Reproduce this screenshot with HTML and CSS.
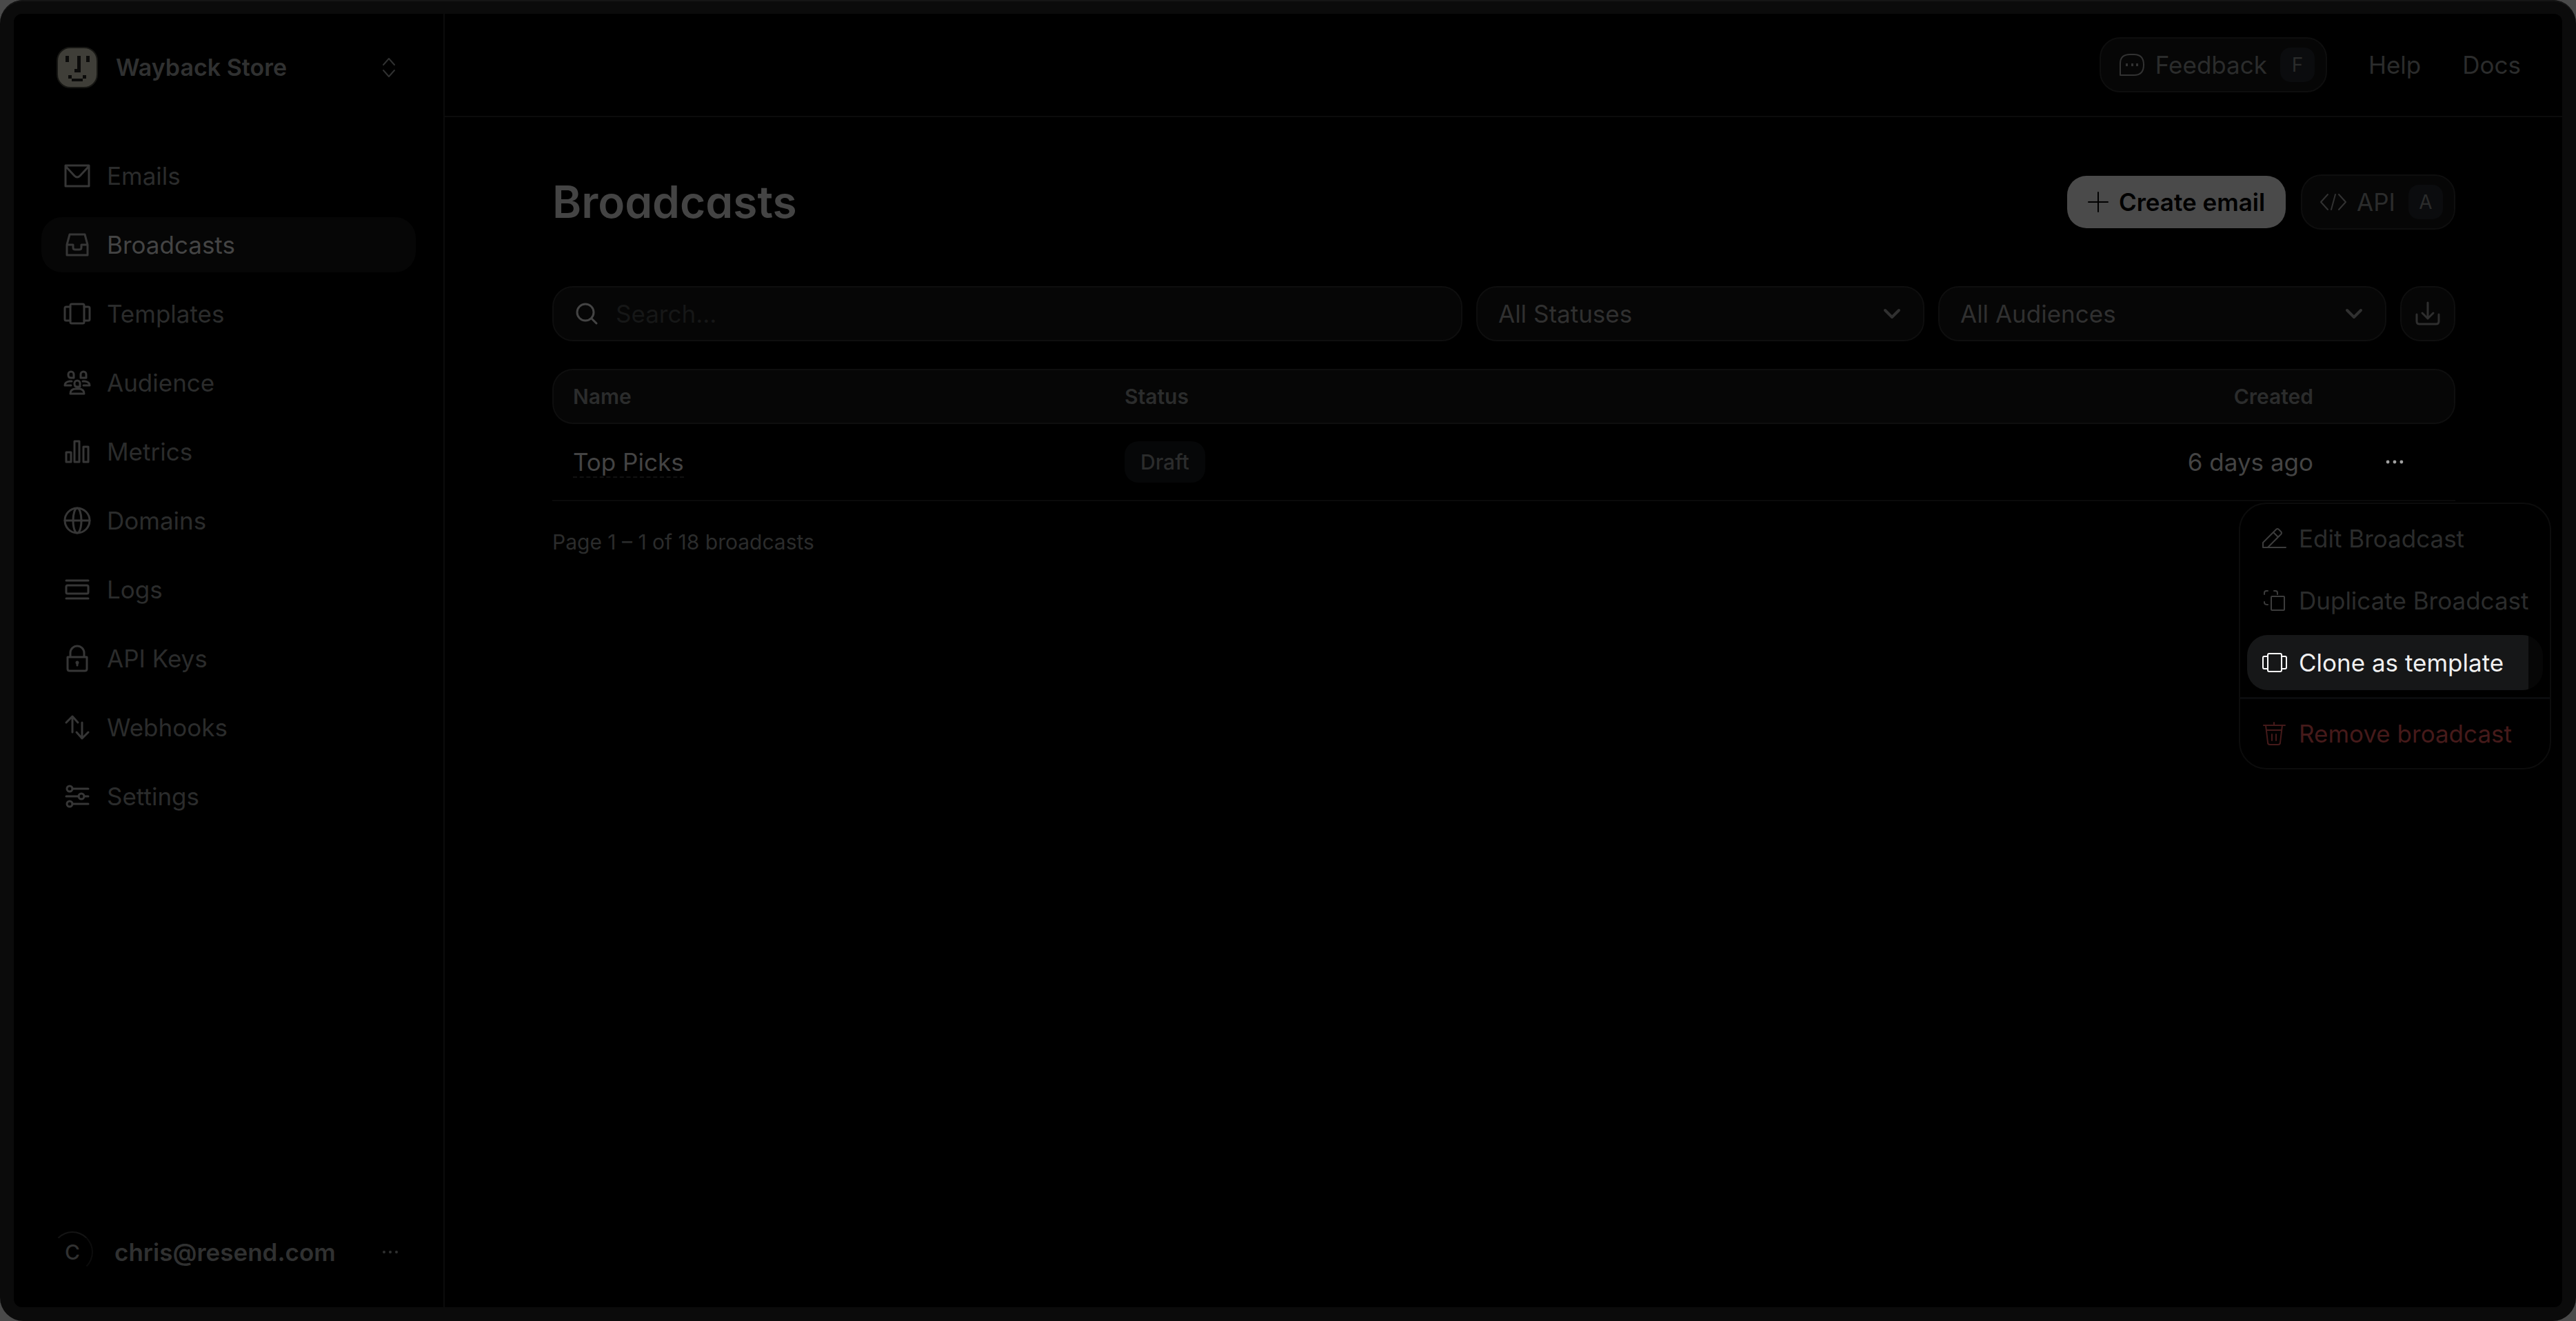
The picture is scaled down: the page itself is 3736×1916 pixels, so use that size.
FILE: index.html
```html
<!DOCTYPE html>
<html lang="en">
<head>
  <meta charset="UTF-8">
  <meta name="viewport" content="width=device-width, initial-scale=1.0">
  <title>Broadcasts</title>
  <link rel="stylesheet" href="styles.css">
</head>
<body>
  <div class="window">
    <div class="app">
      <aside class="sidebar">
        <button type="button" class="team">
          <svg class="team-logo" viewBox="0 0 60 60" fill="none">
            <rect x="1" y="1" width="58" height="58" rx="19" fill="#3f3e38" stroke="#171714" stroke-width="2"/>
            <path fill="#0b0b0a" d="M13 13h5v9h-5zM30 13h5v24h-9v-5h4zM43 13h5v9h-5zM17 41h5v5h-5zM38 41h5v5h-5zM22 46h16v4h-16z"/>
          </svg>
          <span class="team-name">Wayback Store</span>
          <svg class="icon" viewBox="0 0 40 40"><path d="M12 16l8-9 8 9M12 24l8 9 8-9"/></svg>
        </button>

        <nav class="nav">
          <a href="#" class="nav-link">
            <svg class="icon" viewBox="0 0 40 40"><path d="M3 5h34v30H3zM3 6l13 14q4 4 8 0L37 6"/></svg>
            Emails
          </a>
          <a href="#" class="nav-link active">
            <svg class="icon" viewBox="0 0 40 40"><path d="M9 5h22l4 15v15H5V20zM5 20h9v4q0 3 3 3h6q3 0 3-3v-4h9"/></svg>
            Broadcasts
          </a>
          <a href="#" class="nav-link">
            <svg class="icon" viewBox="0 0 40 40"><rect x="10" y="6" width="20" height="28" rx="2"/><path d="M10 10H4q-2 0-2 2v16q0 2 2 2h6M30 10h6q2 0 2 2v16q0 2-2 2h-6"/></svg>
            Templates
          </a>
          <a href="#" class="nav-link">
            <svg class="icon" viewBox="0 0 40 40"><path d="M7 8a4 4 0 0 1 8 0v5h-4q-4 0-4-4zM25 13V8a4 4 0 0 1 8 0v5zM16 21a4 4 0 0 1 8 0v5h-4q-4 0-4-4zM12 18H9q-7 1-7 6h9M28 18h3q7 1 7 6h-9M10 36q0-7 8-7h4q8 0 8 7z"/></svg>
            Audience
          </a>
          <a href="#" class="nav-link">
            <svg class="icon" viewBox="0 0 40 40"><path d="M4 21h7v14H4zM16 5h7v30h-7zM29 13h7v22h-7z"/></svg>
            Metrics
          </a>
          <a href="#" class="nav-link">
            <svg class="icon" viewBox="0 0 40 40"><circle cx="20" cy="20" r="18"/><ellipse cx="20" cy="20" rx="6" ry="18"/><path d="M2 20h36"/></svg>
            Domains
          </a>
          <a href="#" class="nav-link">
            <svg class="icon" viewBox="0 0 40 40"><path d="M4 7h32M4 33h32"/><rect x="4" y="14" width="32" height="12" rx="2"/></svg>
            Logs
          </a>
          <a href="#" class="nav-link">
            <svg class="icon" viewBox="0 0 40 40"><path d="M6 18h28v17q0 3-3 3H9q-3 0-3-3zM10 18v-6a10 10 0 0 1 20 0v6M20 26v4"/><circle cx="20" cy="26" r="1"/></svg>
            API Keys
          </a>
          <a href="#" class="nav-link">
            <svg class="icon" viewBox="0 0 40 40"><path d="M13 27V4M4 13l9-9 8 9M27 13v23M19 27l8 9 9-9"/></svg>
            Webhooks
          </a>
          <a href="#" class="nav-link">
            <svg class="icon" viewBox="0 0 40 40"><circle cx="9" cy="9" r="4"/><circle cx="26" cy="20" r="4"/><circle cx="9" cy="31" r="4"/><path d="M13 9h23M4 20h18M30 20h6M13 31h23"/></svg>
            Settings
          </a>
        </nav>

        <button type="button" class="account">
          <span class="avatar">C</span>
          <span class="account-email">chris@resend.com</span>
          <svg class="icon dots" viewBox="0 0 40 40"><circle cx="11" cy="20" r="2"/><circle cx="20" cy="20" r="2"/><circle cx="29" cy="20" r="2"/></svg>
        </button>
      </aside>

      <div class="page">
        <header class="topbar">
          <button type="button" class="btn">
            <svg class="icon" viewBox="0 0 40 40"><path d="M3 35V18Q3 5 17 5h6q14 0 14 15t-14 15z"/><path class="fill" d="M11 18h3v4h-3zM19 18h3v4h-3zM26 18h3v4h-3z"/></svg>
            Feedback
            <kbd>F</kbd>
          </button>
          <a href="#" class="top-link">Help</a>
          <a href="#" class="top-link">Docs</a>
        </header>

        <main class="content">
          <div class="heading">
            <h1>Broadcasts</h1>
            <button type="button" class="btn-primary">
              <svg class="icon" viewBox="0 0 40 40"><path d="M20 6v28M6 20h28"/></svg>
              Create email
            </button>
            <button type="button" class="btn">
              <svg class="icon" viewBox="0 0 40 40"><path d="M12 9L2 20l10 11M28 9l10 11-10 11M23 9l-6 22"/></svg>
              API
              <kbd>A</kbd>
            </button>
          </div>

          <form class="filters">
            <label class="search">
              <svg class="icon" viewBox="0 0 40 40"><circle cx="18" cy="18" r="12"/><path d="M27 27l7 7"/></svg>
              <input type="text" placeholder="Search..." aria-label="Search">
            </label>
            <div class="select">
              <select aria-label="Status"><option>All Statuses</option></select>
              <svg class="icon chevron" viewBox="0 0 40 40"><path d="M10 15l10 10 10-10"/></svg>
            </div>
            <div class="select">
              <select aria-label="Audience"><option>All Audiences</option></select>
              <svg class="icon chevron" viewBox="0 0 40 40"><path d="M10 15l10 10 10-10"/></svg>
            </div>
            <button type="button" class="btn-icon" aria-label="Export">
              <svg class="icon" viewBox="0 0 40 40"><path d="M20 4v23M12 19l8 8 8-8M4 21v10q0 4 4 4h24q4 0 4-4V21"/></svg>
            </button>
          </form>

          <table class="broadcasts">
            <thead>
              <tr>
                <th class="col-name">Name</th>
                <th>Status</th>
                <th class="col-created">Created</th>
                <th class="col-more"></th>
              </tr>
            </thead>
            <tbody>
              <tr>
                <td><a href="#" class="name">Top Picks</a></td>
                <td><span class="badge">Draft</span></td>
                <td class="col-created">6 days ago</td>
                <td class="col-more">
                  <div class="more">
                    <button type="button" class="more-btn" aria-label="More actions">
                      <svg class="icon dots" viewBox="0 0 40 40"><circle cx="9" cy="20" r="2.7"/><circle cx="20" cy="20" r="2.7"/><circle cx="31" cy="20" r="2.7"/></svg>
                    </button>
                    <div class="menu">
                      <button type="button" class="menu-item">
                        <svg class="icon" viewBox="0 0 40 40"><path d="M4 33v-7L23 7q2-2 4 0l3 3q2 2 0 4L11 33M19 11l7 7M4 33h33"/></svg>
                        Edit Broadcast
                      </button>
                      <button type="button" class="menu-item">
                        <svg class="icon" viewBox="0 0 40 40"><rect x="16" y="14" width="19" height="20" rx="1"/><path d="M6 11V9q0-3 3-3h2M20 6h2q3 0 3 3v2M6 22v1q0 3 5 3"/></svg>
                        Duplicate Broadcast
                      </button>
                      <button type="button" class="menu-item selected">
                        <svg class="icon" viewBox="0 0 40 40"><rect x="11" y="7" width="20" height="26" rx="2"/><path d="M11 11H6q-2 0-2 2v14q0 2 2 2h5M31 11h5q2 0 2 2v14q0 2-2 2h-5"/></svg>
                        Clone as template
                      </button>
                      <hr>
                      <button type="button" class="menu-item danger">
                        <svg class="icon" viewBox="0 0 40 40"><path d="M5 8h31M20 4v4M8 8l3 25q0 3 3 3h12q3 0 3-3l3-25M9 15h22M17 21v9M23 21v9"/></svg>
                        Remove broadcast
                      </button>
                    </div>
                  </div>
                </td>
              </tr>
            </tbody>
          </table>

          <p class="pager">Page 1 – 1 of 18 broadcasts</p>
        </main>
      </div>
    </div>
  </div>
</body>
</html>
```

FILE: styles.css
```css
* {
  box-sizing: border-box;
}
body {
  margin: 0;
  background-color: #4a4a4a;
  color: #444;
  font-family: Inter, "Liberation Sans", sans-serif;
  font-size: 35px;
  line-height: 50px;
}
button, input, select {
  margin: 0;
  padding: 0;
  border: none;
  background: none;
  color: inherit;
  font: inherit;
}
a {
  color: inherit;
  text-decoration: none;
}
.window {
  display: flex;
  min-height: 100vh;
  padding: 20px;
  border-radius: 34px;
  background-color: #0b0b0b;
  box-shadow: inset 0 2px 0 #151515;
}
.app {
  display: flex;
  flex: 1;
  border-radius: 12px;
  background-color: #000;
}
.icon {
  flex: none;
  width: 40px;
  height: 40px;
  fill: none;
  stroke: currentColor;
  stroke-width: 2;
  stroke-linecap: round;
  stroke-linejoin: round;
}
.icon .fill, .icon.dots {
  fill: currentColor;
  stroke: none;
}

/* sidebar */
.sidebar {
  display: flex;
  flex-direction: column;
  flex: none;
  width: 625px;
  padding: 38px 40px 40px;
  border-right: 2px solid #0b0b0b;
}
.team, .account {
  display: flex;
  align-items: center;
  gap: 26px;
  height: 80px;
  padding: 0 19px 0 22px;
  color: #303131;
  text-align: left;
}
.team-logo, .avatar {
  flex: none;
  width: 60px;
  height: 60px;
}
.team-name, .account-email {
  flex: 1;
  font-weight: 600;
}
.team-name {
  font-size: 34px;
}
.nav {
  display: flex;
  flex-direction: column;
  gap: 20px;
  margin-top: 77px;
}
.nav-link {
  display: flex;
  align-items: center;
  gap: 23px;
  height: 80px;
  padding: 0 32px;
  border-radius: 30px;
  color: #2b2c2c;
}
.nav-link .icon {
  color: #363636;
  stroke-width: 3;
}
.nav-link.active {
  background-color: #060606;
  color: #444;
}
.account {
  gap: 31px;
  margin-top: auto;
  padding: 0 17px 0 15px;
}
.avatar {
  display: flex;
  align-items: center;
  justify-content: center;
  border: 2px solid transparent;
  border-top-color: #141414;
  border-right-color: #0c0c0c;
  border-radius: 50%;
  font-size: 30px;
  font-weight: 500;
}

/* top bar */
.page {
  display: flex;
  flex-direction: column;
  flex: 1;
  min-width: 0;
}
.topbar {
  display: flex;
  align-items: center;
  justify-content: flex-end;
  gap: 60px;
  height: 150px;
  padding-right: 60px;
  border-bottom: 2px solid #0b0b0b;
  color: #2b2c2c;
}
.btn {
  display: flex;
  align-items: center;
  gap: 14px;
  height: 80px;
  padding: 0 16px 0 25px;
  border: 2px solid #0e0e0e;
  border-radius: 30px;
  background-color: #060606;
  color: #2b2c2c;
}
.btn .icon {
  color: #323232;
}
kbd {
  width: 50px;
  height: 50px;
  margin-left: 5px;
  border-radius: 15px;
  background-color: #0b0c0e;
  font-family: inherit;
  font-size: 28px;
  text-align: center;
}
.btn-primary {
  display: flex;
  align-items: center;
  gap: 10px;
  height: 76px;
  padding: 0 30px 0 25px;
  border-radius: 28px;
  background-color: #4a4a4a;
  color: #000;
  font-weight: 600;
}

/* content */
.content {
  padding: 83px 155px 0 156px;
}
.heading {
  display: flex;
  align-items: center;
  gap: 22px;
}
h1 {
  flex: 1;
  margin: 0;
  font-size: 64px;
  font-weight: 600;
  line-height: 80px;
  font-feature-settings: "cv11";
}
.filters {
  display: flex;
  gap: 20px;
  margin: 82px 0 40px;
}
.search, .select select, .btn-icon {
  height: 80px;
  border: 2px solid #0e0e0e;
  border-radius: 30px;
  background-color: #060606;
}
.search {
  display: flex;
  align-items: center;
  flex: 1;
  gap: 22px;
  padding: 0 28px;
}
.search .icon {
  stroke-width: 3;
}
.search input {
  flex: 1;
  min-width: 0;
  outline: none;
}
.search input::placeholder {
  color: #161717;
}
.select {
  position: relative;
  width: 650px;
}
.select select {
  width: 100%;
  padding: 0 80px 0 30px;
  color: #303030;
  appearance: none;
}
.chevron {
  position: absolute;
  top: 20px;
  right: 27px;
  color: #303030;
  stroke-width: 4;
  pointer-events: none;
}
.btn-icon {
  display: flex;
  align-items: center;
  justify-content: center;
  width: 80px;
  color: #2e2e2e;
}
.btn-icon .icon {
  stroke-width: 3;
}

/* table */
.broadcasts {
  width: 100%;
  border-collapse: separate;
  border-spacing: 0;
  table-layout: fixed;
  text-align: left;
}
th {
  height: 80px;
  padding: 0 0 0 30px;
  border: solid #0e0e0e;
  border-width: 2px 0;
  background-color: #060606;
  color: #2b2c2c;
  font-size: 30px;
  font-weight: 600;
}
th:first-child {
  padding-left: 28px;
  border-left-width: 2px;
  border-radius: 30px 0 0 30px;
}
th:last-child {
  border-right-width: 2px;
  border-radius: 0 30px 30px 0;
}
td {
  height: 112px;
  padding: 0 0 0 30px;
  border-bottom: 2px solid #0a0a0a;
}
.col-name {
  width: 800px;
}
.col-created {
  text-align: right;
}
.col-more {
  width: 206px;
}
.name {
  border-bottom: 2px dashed #121212;
}
.badge {
  display: inline-block;
  padding: 5px 23px;
  border-radius: 20px;
  background-color: #060708;
  color: #2b2c2c;
  font-size: 30px;
  font-weight: 500;
}
.more {
  position: relative;
}
.more-btn {
  display: flex;
  align-items: center;
  justify-content: center;
  width: 80px;
  height: 80px;
  margin-left: 48px;
  color: #a0a0a0;
}
.more-btn .icon {
  width: 36px;
}
.pager {
  margin: 34px 0 0;
  color: #2b2c2c;
  font-size: 30px;
}

/* row menu */
.menu {
  position: absolute;
  top: 99px;
  right: -139px;
  display: flex;
  flex-direction: column;
  gap: 10px;
  width: 453px;
  padding: 10px;
  border: 2px solid #0c0c0c;
  border-radius: 40px;
  background-color: #000;
}
.menu-item {
  display: flex;
  align-items: center;
  gap: 16px;
  height: 80px;
  padding: 0 19px;
  border-radius: 30px;
  color: #2b2c2c;
  white-space: nowrap;
}
.menu-item .icon {
  color: #3c3c3c;
}
.menu-item.selected {
  background: linear-gradient(to right, #161718 408px, #060606 408px);
  color: #f0f0f0;
}
.menu-item.selected .icon {
  color: #fff;
}
.menu hr {
  width: auto;
  height: 3px;
  margin: 0 -10px;
  border: none;
  background-color: #0b0c0e;
}
.menu-item.danger, .menu-item.danger .icon {
  color: #451a1a;
}
```
